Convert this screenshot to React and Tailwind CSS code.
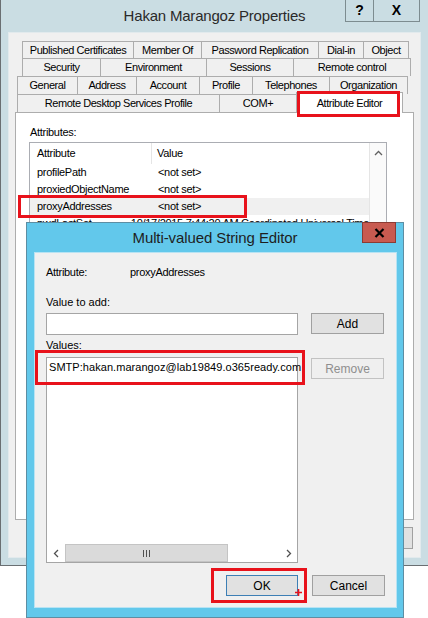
import React from 'react';

const tabRows = [
  { ml: 'ml-[13px]', h: 'h-[17px]', tabs: [['Published Certificates', 112], ['Member Of', 69], ['Password Replication', 118], ['Dial-in', 46], ['Object', 46]] },
  { ml: 'ml-[13px]', h: 'h-[18px]', tabs: [['Security', 79], ['Environment', 107], ['Sessions', 88], ['Remote control', 118]] },
  { ml: 'ml-[8px]', h: 'h-[18px]', tabs: [['General', 61], ['Address', 60], ['Account', 64], ['Profile', 54], ['Telephones', 78], ['Organization', 79]] },
  { ml: 'ml-[8px]', h: 'h-[18px]', tabs: [['Remote Desktop Services Profile', 203], ['COM+', 78], ['Attribute Editor', 107, true]] },
];

const attributes = [
  ['profilePath', '<not set>'],
  ['proxiedObjectName', '<not set>'],
  ['proxyAddresses', '<not set>', true],
  ['pwdLastSet', '10/17/2015 7:44:20 AM Coordinated Universal Time'],
];

const Button = ({ children, className = '' }) => (
  <div className={`flex items-center justify-center border bg-[#e1e1e1] border-[#a0a0a0] text-[12px] ${className}`}>
    {children}
  </div>
);

// red annotation rectangle laid over the screenshot
const RedBox = ({ className }) => (
  <div className={`absolute z-30 border-[3px] border-[#e8121b] pointer-events-none ${className}`} />
);

const App = () => {
  return (
    <div className="relative w-[428px] h-[618px] overflow-hidden bg-white text-black font-['Liberation_Sans',Arial,sans-serif] text-[11px]">
      {/* Properties window */}
      <div className="w-[428px] h-[566px] bg-[#cadde3] border-l border-b border-[#6a6f72] flex flex-col">
        <div className="grid grid-cols-[83px_1fr_83px] h-[32px]">
          <div />
          <div className="flex items-center justify-center text-[15px] text-[#2a2a2a] tracking-[-0.2px] pt-[1px]">
            Hakan Marangoz Properties
          </div>
          <div className="flex items-start">
            <div className="w-[28px] h-[22px] flex items-center justify-center border-l border-b border-[#7d8c90] font-bold text-[14px]">?</div>
            <div className="w-[47px] h-[22px] flex items-center justify-center border-l border-r border-b border-[#7d8c90] font-bold text-[14px]">X</div>
          </div>
        </div>

        {/* client area */}
        <div className="ml-[7px] w-[413px] h-[526px] bg-[#f0f0f0] border border-[#e2eaed] flex flex-col pt-[8px]">
          {tabRows.map((row, i) => (
            <div key={i} className={`flex ${row.ml} ${row.h}`}>
              {row.tabs.map(([label, w, sel], j) => (
                <div
                  key={label}
                  style={{ width: w }}
                  className={`${j > 0 ? '-ml-px' : ''} flex items-center justify-center whitespace-nowrap tracking-[-0.45px] border-t border-l border-r border-[#adadad] ${sel ? 'relative z-10 bg-white h-[21px] -mt-[2px]' : 'bg-[#f0f0f0] h-full'}`}
                >
                  {label}
                </div>
              ))}
            </div>
          ))}

          {/* tab panel */}
          <div className="ml-[6px] w-[399px] h-[408px] bg-white border border-[#adadad] flex flex-col">
            <div className="mt-[12px] pl-[14px] h-[14px] leading-[14px] tracking-[-0.3px]">Attributes:</div>
            <div className="mt-[3px] ml-[13px] w-[358px] h-[290px] border border-[#abadb3] flex">
              <div className="w-[339px] flex flex-col">
                <div className="flex h-[21px] items-center">
                  <div className="w-[122px] h-full pl-[7px] flex items-center border-r border-[#e5e5e5] tracking-[-0.3px]">Attribute</div>
                  <div className="pl-[5px] tracking-[-0.3px]">Value</div>
                </div>
                {attributes.map(([name, value, hl]) => (
                  <div key={name} className={`flex h-[17px] items-center whitespace-nowrap overflow-hidden tracking-[-0.3px] ${hl ? 'bg-[#f0f0f0]' : ''}`}>
                    <div className="w-[122px] pl-[7px]">{name}</div>
                    <div className="pl-[6px]">{value}</div>
                  </div>
                ))}
              </div>
              <div className="w-[18px] border-l border-[#e5e5e5] bg-[#fafafa] flex flex-col">
                <div className="h-[19px] flex items-center justify-center">
                  <svg width="9" height="6" viewBox="0 0 9 6">
                    <path d="M1 5 L4.5 1.5 L8 5" fill="none" stroke="#606060" strokeWidth="1.3" />
                  </svg>
                </div>
              </div>
            </div>
          </div>

          <div className="mt-[7px] mr-[7px] flex justify-end gap-[6px]">
            <Button className="w-[75px] h-[22px]">OK</Button>
            <Button className="w-[75px] h-[22px]">Cancel</Button>
            <Button className="w-[75px] h-[22px]">Apply</Button>
            <Button className="w-[75px] h-[22px]">Help</Button>
          </div>
        </div>
      </div>

      {/* Multi-valued String Editor dialog */}
      <div className="absolute z-20 left-[26px] top-[222px] w-[378px] h-[396px] bg-[#62c8eb] border border-[#5d8ea3] flex flex-col">
        <div className="grid grid-cols-[41px_1fr_41px] h-[29px]">
          <div />
          <div className="flex items-center justify-center text-[15px] text-[#1e1e1e] tracking-[-0.1px] pt-[2px]">
            Multi-valued String Editor
          </div>
          <div className="flex items-start">
            <div className="w-[34px] h-[21px] -mt-px bg-[#c85a50] border border-[#8c3b33] flex items-center justify-center">
              <svg width="11" height="10" viewBox="0 0 11 10">
                <path d="M1.5 1 L9.5 9 M9.5 1 L1.5 9" stroke="#000" strokeWidth="2.2" />
              </svg>
            </div>
          </div>
        </div>

        <div className="ml-[7px] w-[363px] h-[356px] bg-[#f0f0f0] border border-[#b8e3f3] flex flex-col">
          <div className="mt-[12px] pl-[11px] h-[14px] leading-[14px] flex tracking-[-0.3px]">
            <div className="w-[84px]">Attribute:</div>
            <div>proxyAddresses</div>
          </div>
          <div className="mt-[16px] pl-[11px] h-[14px] leading-[14px]">Value to add:</div>
          <div className="mt-[4px] pl-[11px] flex items-start">
            <div className="w-[252px] h-[22px] bg-white border border-[#a5a5a5]" />
            <Button className="ml-[13px] w-[73px] h-[21px]">Add</Button>
          </div>
          <div className="mt-[3px] pl-[11px] h-[14px] leading-[14px]">Values:</div>
          <div className="mt-[5px] pl-[11px] flex items-start">
            <div className="w-[252px] h-[206px] bg-white border border-[#a5a5a5] flex flex-col">
              <div className="pl-[2px] pt-[2px] h-[16px] leading-[14px] text-[11px] tracking-[0.05px] whitespace-nowrap">
                SMTP:hakan.marangoz@lab19849.o365ready.com
              </div>
              <div className="flex-1" />
              <div className="h-[18px] flex bg-white">
                <div className="w-[18px] flex items-center justify-center">
                  <svg width="6" height="9" viewBox="0 0 6 9">
                    <path d="M5 1 L1.5 4.5 L5 8" fill="none" stroke="#505050" strokeWidth="1.3" />
                  </svg>
                </div>
                <div className="w-[163px] bg-[#dadada] border border-[#c4c4c4] flex items-center justify-center">
                  <svg width="7" height="7" viewBox="0 0 7 7">
                    <path d="M0.5 0 V7 M3.5 0 V7 M6.5 0 V7" stroke="#505050" strokeWidth="1" />
                  </svg>
                </div>
                <div className="flex-1" />
                <div className="w-[17px] flex items-center justify-center">
                  <svg width="6" height="9" viewBox="0 0 6 9">
                    <path d="M1 1 L4.5 4.5 L1 8" fill="none" stroke="#505050" strokeWidth="1.3" />
                  </svg>
                </div>
              </div>
            </div>
            <div className="ml-[13px] mt-[1px] w-[73px] h-[21px] flex items-center justify-center border border-[#c2c2c2] bg-[#efefef] text-[#8e8e8e] text-[12px]">
              Remove
            </div>
          </div>
          <div className="mt-[12px] pr-[11px] flex justify-end gap-[14px]">
            <Button className="w-[72px] h-[21px] !border-[#3d7fb5]">OK</Button>
            <Button className="w-[73px] h-[21px]">Cancel</Button>
          </div>
        </div>
      </div>

      {/* annotations */}
      <RedBox className="left-[297px] top-[91px] w-[103px] h-[26px]" />
      <RedBox className="left-[18px] top-[195px] w-[229px] h-[23px]" />
      <RedBox className="left-[35px] top-[350px] w-[270px] h-[35px]" />
      <RedBox className="left-[211px] top-[568px] w-[96px] h-[35px]" />
      <svg className="absolute z-30 left-[295px] top-[589px]" width="7" height="7" viewBox="0 0 7 7">
        <path d="M3.5 0 V7 M0 3.5 H7" stroke="#e8121b" strokeWidth="1.6" />
      </svg>
    </div>
  );
};

export default App;
